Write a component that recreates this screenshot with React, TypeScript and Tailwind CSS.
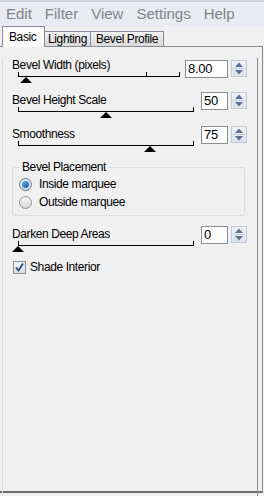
const font = { fontFamily: '"Liberation Sans", Arial, sans-serif' }

const menu = ['Edit', 'Filter', 'View', 'Settings', 'Help']

function Track({ width, from, to, ticks, thumb }: { width: number; from: number; to: number; ticks: number[]; thumb: number }) {
  return (
    <svg width={width} height={12} shapeRendering="crispEdges" className="block">
      <line x1={from} y1={4.5} x2={to + 1} y2={4.5} stroke="#000" />
      {[from, ...ticks, to].map((t) => (
        <line key={t} x1={t + 0.5} y1={0} x2={t + 0.5} y2={5} stroke="#000" />
      ))}
      <polygon points={`${thumb - 6},11 ${thumb + 6},11 ${thumb},5`} fill="#000" shapeRendering="auto" />
    </svg>
  )
}

function Spinner() {
  return (
    <svg width={16} height={17} className="block">
      <defs>
        <linearGradient id="sp" x1="0" y1="0" x2="0" y2="1">
          <stop offset="0" stopColor="#eef2f7" />
          <stop offset="1" stopColor="#d9e1ea" />
        </linearGradient>
      </defs>
      <rect x={0.5} y={0.5} width={15} height={16} fill="url(#sp)" stroke="#c3ccd6" />
      <line x1={2} y1={8.5} x2={14} y2={8.5} stroke="#c3ccd6" />
      <polygon points="4,7 12,7 8,2.5" fill="#5b7193" />
      <polygon points="4,10 12,10 8,14.5" fill="#5b7193" />
    </svg>
  )
}

function Field({ value, w }: { value: string; w: number }) {
  return (
    <div className="flex items-start gap-[3px]">
      <div
        className="h-[18px] bg-white border border-[#8b8f94] pl-[2px] text-[13px] leading-[16px] text-black tracking-[-0.3px]"
        style={{ width: w }}
      >
        {value}
      </div>
      <Spinner />
    </div>
  )
}

export default function App() {
  return (
    <div className="w-[264px] h-[496px] overflow-hidden bg-[#f0f0f0] flex flex-col" style={font}>
      {/* menu */}
      <div className="h-[27px] shrink-0 border-t-2 border-[#cfd3d9] bg-[#e8ebf0] flex items-center pl-[6px] gap-[13px] text-[15px] text-[#808489]">
        {menu.map((m) => (
          <span key={m}>{m}</span>
        ))}
      </div>

      {/* tabs */}
      <div className="h-[20px] shrink-0 flex items-end pl-[2px] text-[12px] tracking-[-0.4px] text-black relative z-10 -mb-px whitespace-nowrap">
        <div className="h-[21px] w-[43px] bg-[#fcfcfc] border border-b-0 border-[#898c95] pl-[6px] pt-[3px] leading-[14px]">
          Basic
        </div>
        <div className="h-[16px] w-[46px] bg-gradient-to-b from-[#f2f2f2] to-[#d9d9d9] border border-l-0 border-[#898c95] text-center leading-[14px]">
          Lighting
        </div>
        <div className="h-[16px] w-[73px] bg-gradient-to-b from-[#f2f2f2] to-[#d9d9d9] border border-l-0 border-[#898c95] text-center leading-[14px]">
          Bevel Profile
        </div>
      </div>

      {/* body */}
      <div className="w-[263px] h-[447px] shrink-0 border-t border-r border-[#898c95] border-b-2 border-b-[#6f6f6f] pl-[2px]">
        <div className="h-full w-[256px] border-l border-l-[#dcdcdc] border-r border-r-[#8c8c8c] border-b border-b-[#e2e2e2] pl-[9px] text-[12px] tracking-[-0.4px] text-black whitespace-nowrap">
          {/* Bevel Width */}
          <div className="mt-[11px] flex items-start">
            <div className="w-[173px]">
              <div className="h-[14px] leading-[14px]">Bevel Width (pixels)</div>
              <Track width={173} from={6} to={167} ticks={[134]} thumb={14} />
            </div>
            <div className="mt-[2px]">
              <Field value="8.00" w={43} />
            </div>
          </div>

          {/* Bevel Height Scale */}
          <div className="mt-[8px] flex items-start">
            <div className="w-[189px] pt-[1px]">
              <div className="h-[14px] leading-[14px]">Bevel Height Scale</div>
              <Track width={189} from={6} to={181} ticks={[]} thumb={94} />
            </div>
            <Field value="50" w={27} />
          </div>

          {/* Smoothness */}
          <div className="mt-[7px] flex items-start">
            <div className="w-[189px] pt-[1px]">
              <div className="h-[14px] leading-[14px]">Smoothness</div>
              <Track width={189} from={6} to={181} ticks={[]} thumb={138} />
            </div>
            <Field value="75" w={27} />
          </div>

          {/* Bevel Placement */}
          <div className="relative mt-[14px] w-[233px] h-[49px] border border-[#d5dfe5] rounded-[3px]">
            <div className="absolute -top-[8px] left-[7px] px-[2px] bg-[#f0f0f0] leading-[14px]">Bevel Placement</div>
            <div className="pt-[9px] pl-[6px] flex flex-col gap-[4px]">
              <label className="flex items-center gap-[7px] h-[14px] leading-[14px]">
                <span className="w-[13px] h-[13px] rounded-full border border-[#6b7a8c] bg-gradient-to-b from-[#e6eef7] to-[#cfd8e2] flex items-center justify-center">
                  <span className="w-[7px] h-[7px] rounded-full bg-gradient-to-br from-[#5fb3ee] to-[#155c9e]" />
                </span>
                Inside marquee
              </label>
              <label className="flex items-center gap-[7px] h-[14px] leading-[14px]">
                <span className="w-[13px] h-[13px] rounded-full border border-[#8d9299] bg-gradient-to-b from-[#f5f5f5] to-[#d8d8d8]" />
                Outside marquee
              </label>
            </div>
          </div>

          {/* Darken Deep Areas */}
          <div className="mt-[10px] flex items-start">
            <div className="w-[189px] pt-[1px]">
              <div className="h-[14px] leading-[14px]">Darken Deep Areas</div>
              <Track width={189} from={6} to={181} ticks={[]} thumb={6} />
            </div>
            <Field value="0" w={27} />
          </div>

          {/* Shade Interior */}
          <label className="mt-[7px] flex items-center gap-[4px] h-[14px] leading-[14px] pl-[1px]">
            <span className="w-[13px] h-[13px] border border-[#8e8f8f] bg-gradient-to-b from-[#f2f5f9] to-[#d5dde6] flex items-center justify-center">
              <svg width={11} height={11} viewBox="0 0 11 11">
                <path d="M2 5.5 L4.5 8.5 L9 1.5" fill="none" stroke="#2b4c8c" strokeWidth={1.8} />
              </svg>
            </span>
            Shade Interior
          </label>
        </div>
      </div>
    </div>
  )
}
